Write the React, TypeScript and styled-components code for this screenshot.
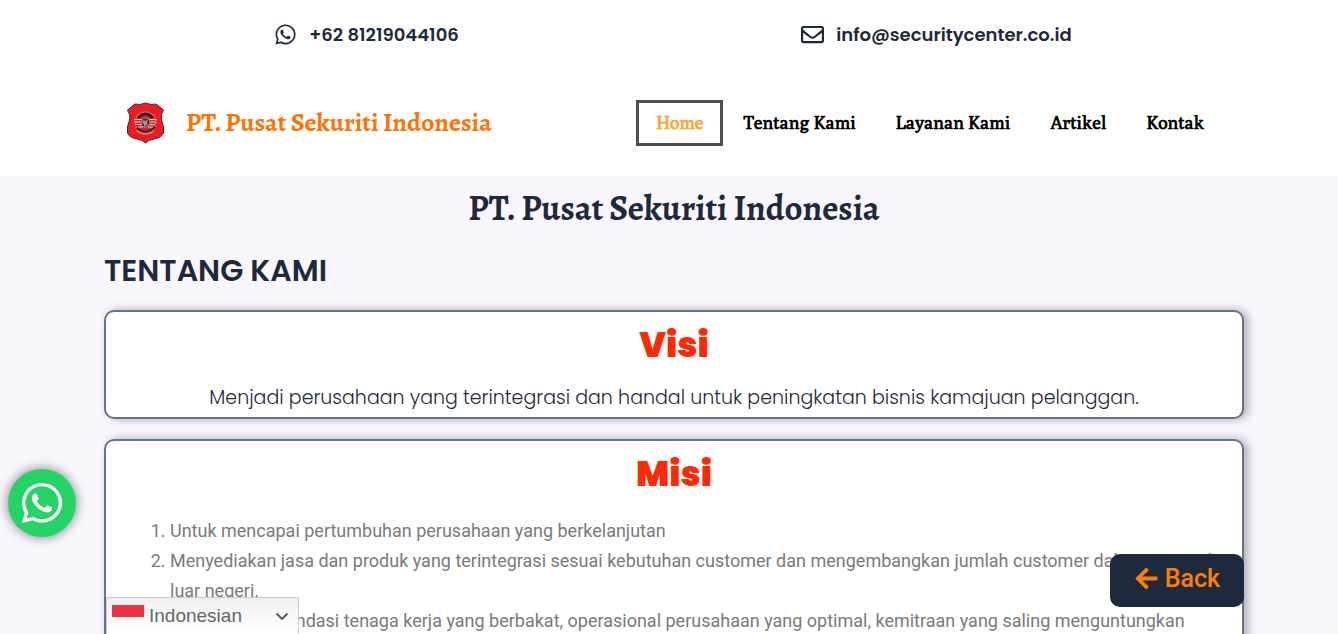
import React from "react";
import styled, { createGlobalStyle } from "styled-components";
import { FaWhatsapp, FaRegEnvelope, FaArrowLeft } from "react-icons/fa";

const sans = `"Poppins", "Inter", sans-serif`;
const serif = `"Alegreya", "Liberation Serif", serif`;
const menuSerif = `"Poly", "Liberation Serif", serif`;
const navy = "#1e293b";

const GlobalStyle = createGlobalStyle`
  *, *::before, *::after { box-sizing: border-box; }
  body { margin: 0; background: #f9f6fe; color: ${navy}; font-family: ${sans}; }
  h1, h2, h3, p, ol, ul { margin: 0; padding: 0; }
`;

const Page = styled.div`
  height: 100vh;
  overflow: hidden;
`;

const Header = styled.header`
  background: #fff;
  padding: 0 94px 0 104px;
`;

const ContactBar = styled.address`
  display: grid;
  grid-template-columns: 1fr 1fr;
  height: 70px;
  padding-bottom: 2px;
  font-style: normal;
`;

const ContactLink = styled.a`
  display: flex;
  align-items: center;
  justify-content: center;
  gap: 12px;
  padding-right: 45px;
  color: ${navy};
  font-size: 18px;
  font-weight: 600;
  text-decoration: none;
`;

const NavBar = styled.div`
  display: flex;
  align-items: center;
  justify-content: space-between;
  height: 106px;
  padding: 0 20px 0 22px;
`;

const Brand = styled.a`
  display: flex;
  align-items: center;
  gap: 21px;
  color: #ff7300;
  font: 700 26px/34px ${serif};
  text-rendering: optimizeLegibility;
  text-decoration: none;
`;

const Menu = styled.nav`
  display: flex;
`;

const MenuLink = styled.a<{ $active?: boolean }>`
  padding: 0 17px;
  border: 3px solid ${(p) => (p.$active ? "#4f4f4f" : "transparent")};
  color: ${(p) => (p.$active ? "#ffa332" : "#000")};
  font: 700 18px/40px ${menuSerif};
  text-decoration: none;
`;

const Main = styled.main`
  padding: 12px 94px 0 104px;
`;

const CompanyName = styled.h1`
  font: 700 35px/40px ${serif};
  text-rendering: optimizeLegibility;
  text-align: center;
`;

const SectionTitle = styled.h2`
  margin: 23px 0 19px;
  font-size: 30px;
  font-weight: 600;
  line-height: 40px;
`;

const Card = styled.section`
  margin-bottom: 20px;
  padding: 8px 10px 4px;
  border: 2px solid #64748b;
  border-radius: 10px;
  background: #fff;
  box-shadow: 4px 0 10px rgba(0, 0, 0, 0.3);
`;

const CardTitle = styled.h3`
  color: #ff2a04;
  font-size: 35px;
  font-weight: 900;
  line-height: 50px;
  text-align: center;
`;

const Vision = styled.p`
  margin-top: 13px;
  font-size: 19px;
  font-weight: 300;
  line-height: 30px;
  text-align: center;
`;

const MissionList = styled.ol`
  margin-top: 17px;
  padding: 0 0 20px 54px;
  color: #7a7a7a;
  font: 400 18px/30px Roboto, sans-serif;
`;

const ChatButton = styled.a`
  position: fixed;
  left: 8px;
  bottom: 97px;
  display: grid;
  place-items: center;
  width: 68px;
  height: 68px;
  border-radius: 50%;
  background: #25d366;
  color: #fff;
  box-shadow: 0 0 12px rgba(0, 0, 0, 0.5);
`;

const BackButton = styled.button`
  position: fixed;
  right: 94px;
  bottom: 27px;
  display: flex;
  align-items: center;
  justify-content: center;
  gap: 6px;
  width: 134px;
  height: 53px;
  padding: 0 0 4px;
  border: 0;
  border-radius: 10px;
  background: ${navy};
  color: #ff8000;
  font: 500 25px/30px Roboto, sans-serif;
`;

const LanguagePicker = styled.label`
  position: fixed;
  left: 106px;
  bottom: 0;
  display: flex;
  align-items: center;
  width: 193px;
  height: 37px;
  padding: 0 9px 0 5px;
  border: 1px solid #ccc;
  border-bottom: 0;
  background: linear-gradient(#efefef, #fff);
  color: #666;
`;

const LanguageSelect = styled.select`
  flex: 1;
  min-width: 0;
  appearance: none;
  padding: 0 0 0 5px;
  border: 0;
  background: transparent;
  color: #666;
  font: 400 19px/24px "Liberation Sans", Arial, sans-serif;
`;

const Flag = () => (
  <svg width="32" height="24" viewBox="0 0 32 24" aria-hidden="true">
    <path fill="#ea3340" d="M0 1h32v12H0z" />
  </svg>
);

const Chevron = () => (
  <svg width="14" height="9" viewBox="0 0 14 9" fill="none" stroke="#555" strokeWidth="1.8" aria-hidden="true">
    <path d="M1.500 1.500l5.500 5.500 5.500-5.500" />
  </svg>
);

const Shield = () => (
  <svg width="39" height="42" viewBox="0 0 39 42" aria-hidden="true">
    <path
      d="M9 2Q14 3.500 19.500 1Q25 3.500 30 2L37.500 8Q34 13 35.500 18Q38.500 25 37.500 31Q35 36 28 37Q22 38 19.500 41Q17 38 11 37Q4 36 1.500 31Q.5 25 3.500 18Q5 13 1.500 8Z"
      fill="#ed1c24"
      stroke="#54202b"
      strokeWidth="1"
    />
    <circle cx="19.500" cy="20.500" r="10.500" fill="none" stroke="#b98d88" strokeWidth="1.500" strokeDasharray="1.500 1.200" />
    <path d="M12 16Q19.500 8 27 16" fill="none" stroke="#191315" strokeWidth="2.500" />
    <path d="M8 17.500h8M23 17.500h8M9 20h7M23 20h7M10 22.500h6M23 22.500h6M12 25h5M22 25h5" stroke="#f0d0ca" strokeWidth="1.200" />
    <circle cx="19.500" cy="20.500" r="4.500" fill="#332b2d" stroke="#a39490" strokeWidth="1" />
    <path d="M17 18l3 1 2-2-1 4 2 3-3-1-2 3 0-4-2-1z" fill="#9f9692" />
    <path d="M11 26Q19.500 34 29 25" fill="none" stroke="#342225" strokeWidth="1.800" />
    <path d="M11 29Q19.500 35 28 29" fill="none" stroke="#d2aaa1" strokeWidth="1.400" strokeDasharray="2 1" />
  </svg>
);

const menu = ["Home", "Tentang Kami", "Layanan Kami", "Artikel", "Kontak"];

const missions = [
  "Untuk mencapai pertumbuhan perusahaan yang berkelanjutan",
  "Menyediakan jasa dan produk yang terintegrasi sesuai kebutuhan customer dan mengembangkan jumlah customer dalam negeri dan luar negeri.",
  "Membangun pondasi tenaga kerja yang berbakat, operasional perusahaan yang optimal, kemitraan yang saling menguntungkan",
];

export default function App() {
  return (
    <Page>
      <GlobalStyle />
      <Header>
        <ContactBar>
          <ContactLink href="tel:+6281219044106">
            <FaWhatsapp size={23} />
            +62 81219044106
          </ContactLink>
          <ContactLink href="mailto:info@securitycenter.co.id">
            <FaRegEnvelope size={23} />
            info@securitycenter.co.id
          </ContactLink>
        </ContactBar>
        <NavBar>
          <Brand href="#home">
            <Shield />
            PT. Pusat Sekuriti Indonesia
          </Brand>
          <Menu aria-label="Menu">
            {menu.map((label, i) => (
              <MenuLink key={label} href={`#${label}`} $active={i === 0}>
                {label}
              </MenuLink>
            ))}
          </Menu>
        </NavBar>
      </Header>
      <Main>
        <CompanyName>PT. Pusat Sekuriti Indonesia</CompanyName>
        <SectionTitle>TENTANG KAMI</SectionTitle>
        <Card>
          <CardTitle>Visi</CardTitle>
          <Vision>Menjadi perusahaan yang terintegrasi dan handal untuk peningkatan bisnis kamajuan pelanggan.</Vision>
        </Card>
        <Card>
          <CardTitle>Misi</CardTitle>
          <MissionList>
            {missions.map((text) => (
              <li key={text}>{text}</li>
            ))}
          </MissionList>
        </Card>
      </Main>
      <ChatButton href="#whatsapp" aria-label="WhatsApp">
        <FaWhatsapp size={46} />
      </ChatButton>
      <LanguagePicker>
        <Flag />
        <LanguageSelect aria-label="Bahasa">
          <option>Indonesian</option>
        </LanguageSelect>
        <Chevron />
      </LanguagePicker>
      <BackButton type="button">
        <FaArrowLeft size={25} />
        Back
      </BackButton>
    </Page>
  );
}
